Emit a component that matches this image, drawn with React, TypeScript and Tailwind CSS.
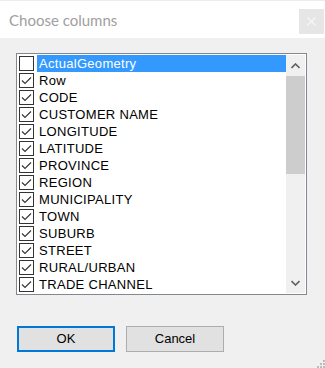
type Column = {
  name: string;
  checked: boolean;
};

const columns: Column[] = [
  { name: "ActualGeometry", checked: false },
  { name: "Row", checked: true },
  { name: "CODE", checked: true },
  { name: "CUSTOMER NAME", checked: true },
  { name: "LONGITUDE", checked: true },
  { name: "LATITUDE", checked: true },
  { name: "PROVINCE", checked: true },
  { name: "REGION", checked: true },
  { name: "MUNICIPALITY", checked: true },
  { name: "TOWN", checked: true },
  { name: "SUBURB", checked: true },
  { name: "STREET", checked: true },
  { name: "RURAL/URBAN", checked: true },
  { name: "TRADE CHANNEL", checked: true },
];

function CheckBox({ checked }: { checked: boolean }) {
  return (
    <div className="w-[15px] h-[15px] border border-[#333333] bg-white flex items-center justify-center shrink-0">
      {checked && (
        <svg width="13" height="13" viewBox="0 0 13 13">
          <polyline points="2,6.5 5,9.5 11,3.5" fill="none" stroke="#333333" strokeWidth="1.1" />
        </svg>
      )}
    </div>
  );
}

function ScrollBar() {
  return (
    <div className="w-[19px] h-full bg-[#f0f0f0] flex flex-col shrink-0">
      <div className="h-[21px] flex items-center justify-center">
        <svg width="9" height="6" viewBox="0 0 9 6">
          <polyline points="0.5,5 4.5,1 8.5,5" fill="none" stroke="#606060" strokeWidth="1.6" />
        </svg>
      </div>
      <div className="h-[98px] bg-[#cdcdcd]" />
      <div className="flex-1" />
      <div className="h-[21px] flex items-center justify-center">
        <svg width="9" height="6" viewBox="0 0 9 6">
          <polyline points="0.5,1 4.5,5 8.5,1" fill="none" stroke="#606060" strokeWidth="1.6" />
        </svg>
      </div>
    </div>
  );
}

export default function App() {
  return (
    <div className="w-[325px] h-[368px] bg-[#f0f0f0] flex flex-col relative overflow-hidden" style={{ fontFamily: "'Liberation Sans', Arial, sans-serif" }}>
      {/* title bar */}
      <div className="h-[38px] bg-white border-t border-[#ececec] flex items-start justify-between">
        <div className="pl-[9px] pt-[9px] text-[15px] text-[#a0a0a0] leading-[20px]" style={{ fontFamily: "Lato, sans-serif" }}>
          Choose columns
        </div>
        <div className="mt-[8px] mr-[1px] w-[25px] h-[25px] bg-[#e6e6e6] flex items-center justify-center">
          <svg width="9" height="9" viewBox="0 0 9 9">
            <path d="M0.5 0.5 L8.5 8.5 M8.5 0.5 L0.5 8.5" stroke="#f7f7f7" strokeWidth="1.2" />
          </svg>
        </div>
      </div>

      {/* list */}
      <div className="mt-[15px] ml-[16px] w-[291px] h-[242px] border border-[#828790] bg-white p-[1px] flex">
        <div className="flex-1 flex flex-col">
          {columns.map((c, i) => (
            <div key={c.name} className="h-[17px] flex items-center">
              <div className="ml-[1px]">
                <CheckBox checked={c.checked} />
              </div>
              <div
                className={
                  "ml-[3px] flex-1 h-[17px] pl-[2px] text-[13px] leading-[17px] tracking-[0.3px] " +
                  (i === 0 ? "bg-[#3399ff] text-white" : "text-black")
                }
              >
                {c.name}
              </div>
            </div>
          ))}
        </div>
        <ScrollBar />
      </div>

      {/* buttons */}
      <div className="mt-[31px] ml-[17px] flex gap-[11px]">
        <button className="w-[98px] h-[26px] bg-[#e1e1e1] border-2 border-[#0078d7] text-[13px] text-black">
          OK
        </button>
        <button className="w-[98px] h-[26px] bg-[#e1e1e1] border border-[#adadad] text-[13px] text-black">
          Cancel
        </button>
      </div>

      {/* resize grip */}
      <svg className="absolute right-0 bottom-0" width="10" height="10" viewBox="0 0 10 10">
        <rect x="8" y="2" width="2" height="2" fill="#bcbcbc" />
        <rect x="5" y="5" width="2" height="2" fill="#bcbcbc" />
        <rect x="8" y="5" width="2" height="2" fill="#bcbcbc" />
        <rect x="2" y="8" width="2" height="2" fill="#bcbcbc" />
        <rect x="5" y="8" width="2" height="2" fill="#bcbcbc" />
        <rect x="8" y="8" width="2" height="2" fill="#bcbcbc" />
      </svg>
    </div>
  );
}
